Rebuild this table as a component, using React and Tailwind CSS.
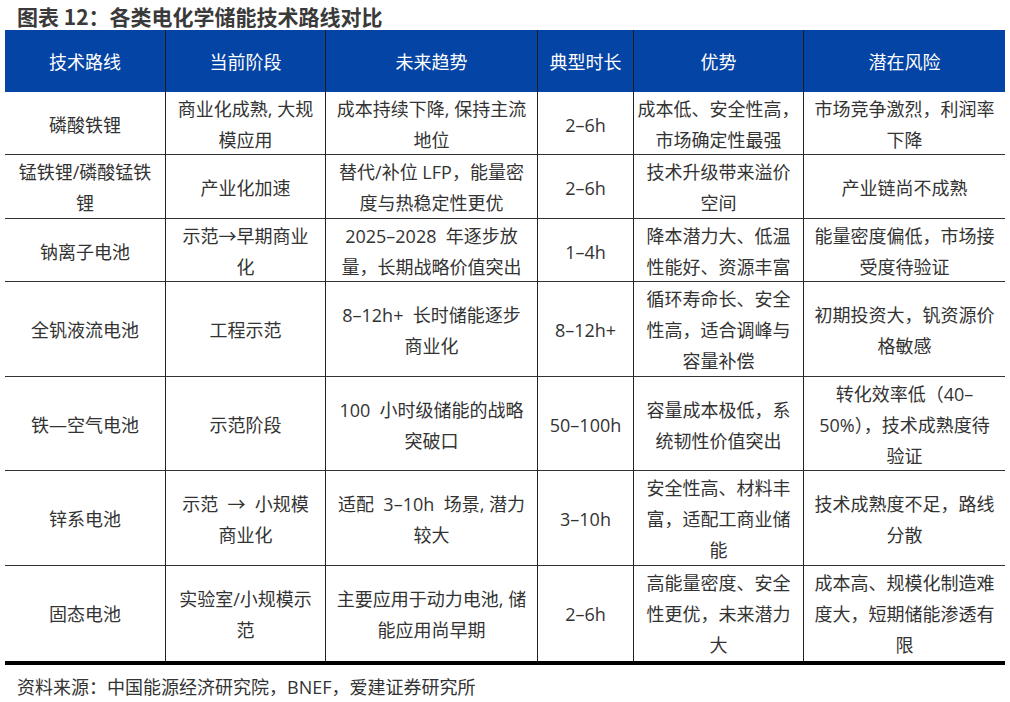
import React from "react";

const COLS = "grid grid-cols-[160px_160px_212px_96px_170px_202px]";

const headers = ["技术路线", "当前阶段", "未来趋势", "典型时长", "优势", "潜在风险"];

const rows = [
  {
    h: "h-[63px] border-b border-[#333]",
    cells: [
      ["磷酸铁锂"],
      ["商业化成熟, 大规", "模应用"],
      ["成本持续下降, 保持主流", "地位"],
      ["2–6h"],
      ["成本低、安全性高，", "市场确定性最强"],
      ["市场竞争激烈，利润率", "下降"],
    ],
  },
  {
    h: "h-[64px] border-b border-[#333]",
    cells: [
      ["锰铁锂/磷酸锰铁", "锂"],
      ["产业化加速"],
      ["替代/补位 LFP，能量密", "度与热稳定性更优"],
      ["2–6h"],
      ["技术升级带来溢价", "空间"],
      ["产业链尚不成熟"],
    ],
  },
  {
    h: "h-[63px] border-b border-[#333]",
    cells: [
      ["钠离子电池"],
      ["示范→早期商业", "化"],
      ["2025–2028\u00a0\u00a0年逐步放", "量，长期战略价值突出"],
      ["1–4h"],
      ["降本潜力大、低温", "性能好、资源丰富"],
      ["能量密度偏低，市场接", "受度待验证"],
    ],
  },
  {
    h: "h-[95px] border-b border-[#333]",
    cells: [
      ["全钒液流电池"],
      ["工程示范"],
      ["8–12h+\u00a0\u00a0长时储能逐步", "商业化"],
      ["8–12h+"],
      ["循环寿命长、安全", "性高，适合调峰与", "容量补偿"],
      ["初期投资大，钒资源价", "格敏感"],
    ],
  },
  {
    h: "h-[94px] border-b border-[#333]",
    cells: [
      ["铁—空气电池"],
      ["示范阶段"],
      ["100\u00a0\u00a0小时级储能的战略", "突破口"],
      ["50–100h"],
      ["容量成本极低，系", "统韧性价值突出"],
      ["转化效率低（40–", "50%），技术成熟度待", "验证"],
    ],
  },
  {
    h: "h-[95px] border-b border-[#333]",
    cells: [
      ["锌系电池"],
      ["示范\u00a0\u00a0→\u00a0\u00a0小规模", "商业化"],
      ["适配\u00a0\u00a03–10h\u00a0\u00a0场景, 潜力", "较大"],
      ["3–10h"],
      ["安全性高、材料丰", "富，适配工商业储", "能"],
      ["技术成熟度不足，路线", "分散"],
    ],
  },
  {
    h: "h-[95px]",
    cells: [
      ["固态电池"],
      ["实验室/小规模示", "范"],
      ["主要应用于动力电池, 储", "能应用尚早期"],
      ["2–6h"],
      ["高能量密度、安全", "性更优，未来潜力", "大"],
      ["成本高、规模化制造难", "度大，短期储能渗透有", "限"],
    ],
  },
];

const FONT = { fontFamily: '"Open Sans", "Noto Sans CJK SC", sans-serif' };

export default function App() {
  return (
    <div className="w-[1010px] h-[702px] bg-white overflow-hidden" style={FONT}>
      <div
        className="h-[30px] pl-[17px] flex items-center text-[21px] font-bold text-[#3a3a3a] leading-[30px] pt-[1px]"
        style={{ fontFamily: '"Noto Sans CJK SC", "Open Sans", sans-serif' }}
      >
        图表 12：各类电化学储能技术路线对比
      </div>
      <div className="ml-[5px] w-[1000px] border-b-[4px] border-black">
        <div className={COLS + " h-[62px] bg-[#0444a4] text-white text-[18px]"}>
          {headers.map((t, i) => (
            <div
              key={i}
              className={
                i === 0
                  ? "flex items-center justify-center pt-[3px]"
                  : "flex items-center justify-center pt-[3px] border-l border-[#1c1c1c]"
              }
            >
              {t}
            </div>
          ))}
        </div>
        {rows.map((r, ri) => (
          <div key={ri} className={COLS + " " + r.h + " text-[18px] text-[#333] leading-[31px]"}>
            {r.cells.map((lines, ci) => (
              <div
                key={ci}
                className={
                  ci === 0
                    ? "flex flex-col items-center justify-center pt-[2px] text-center whitespace-nowrap"
                    : "flex flex-col items-center justify-center pt-[2px] text-center whitespace-nowrap border-l border-[#222]"
                }
              >
                {lines.map((l, li) => (
                  <div key={li}>{l}</div>
                ))}
              </div>
            ))}
          </div>
        ))}
      </div>
      <div className="h-[37px] pt-[8px] pl-[17px] flex items-center text-[18px] text-[#333]">
        资料来源：中国能源经济研究院，BNEF，爱建证券研究所
      </div>
    </div>
  );
}
